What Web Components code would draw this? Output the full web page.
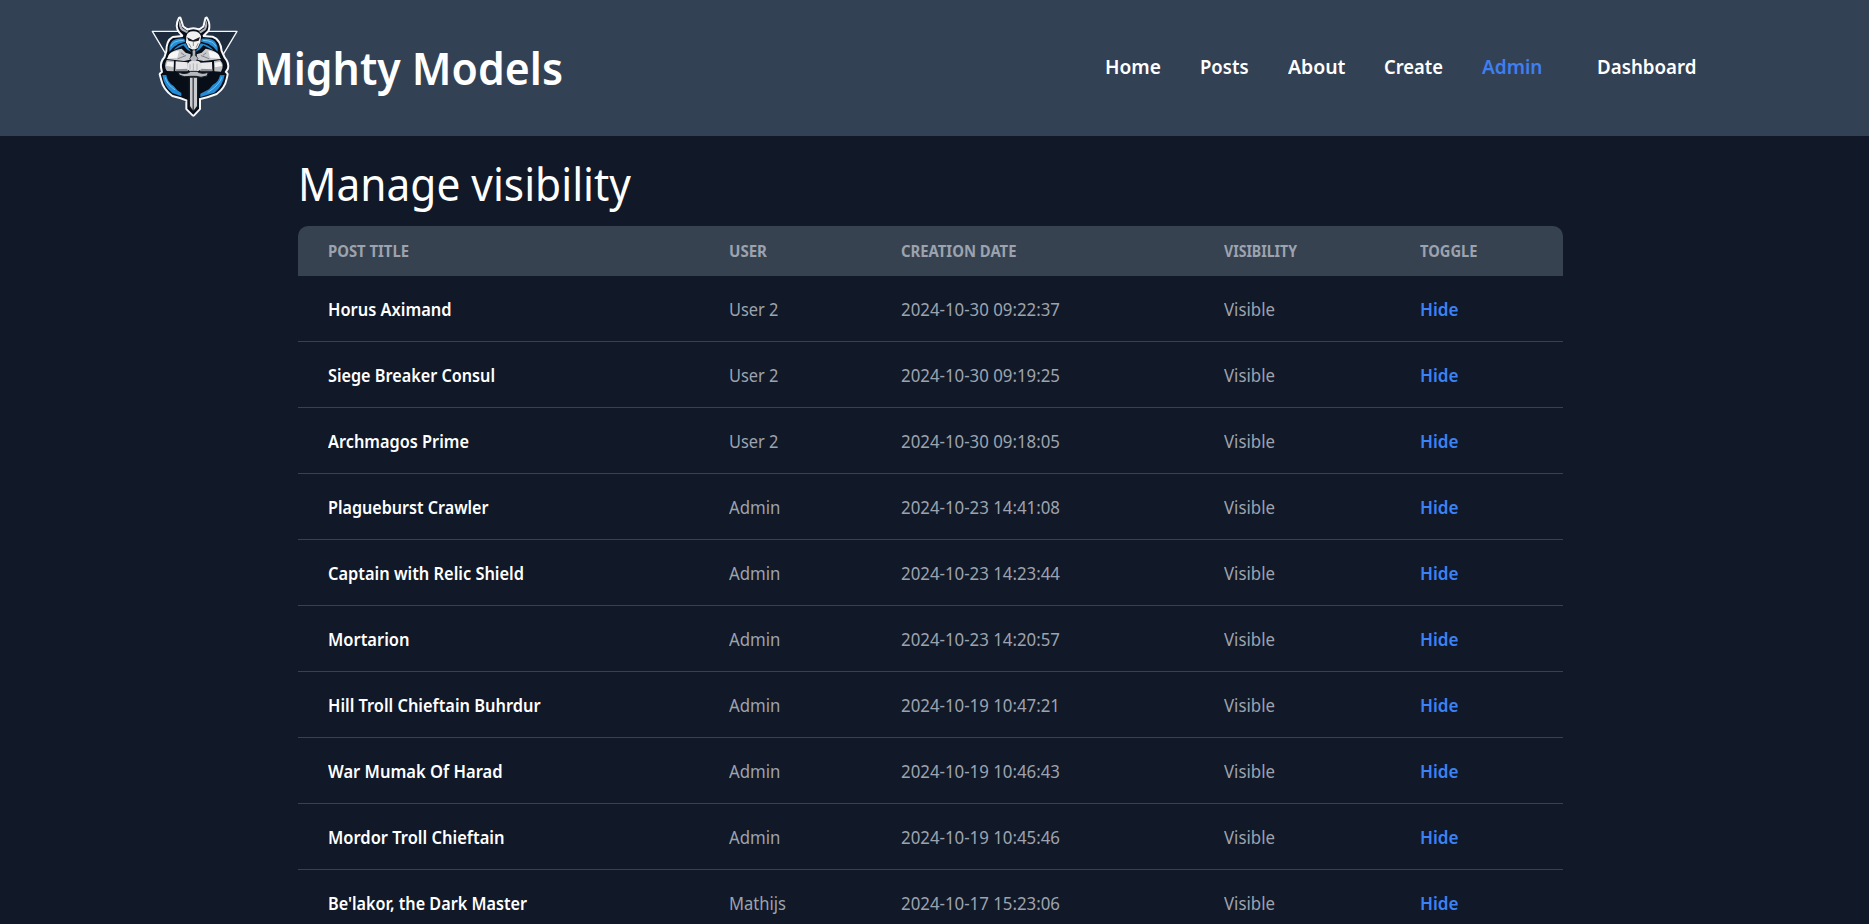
<!DOCTYPE html>
<html lang="en">
<head>
<meta charset="utf-8">
<title>Mighty Models</title>
<style>
body{margin:0;background:#111827;color:#fff;font-family:"Noto Sans","Open Sans",sans-serif;overflow:hidden;height:924px}
</style>
</head>
<body>
<mm-app></mm-app>
<script>
const define=(name,html,setup)=>customElements.define(name,class extends HTMLElement{
  connectedCallback(){
    if(this.shadowRoot)return;
    const t=document.createElement('template');
    t.innerHTML=typeof html==='function'?html(this):html;
    this.attachShadow({mode:'open'}).append(t.content.cloneNode(true));
    if(setup)setup(this);
  }
});

// Single line of text condensed to occupy a given width.
define('mm-text','<style>:host{display:inline-block;white-space:nowrap}span{display:inline-block;transform-origin:0 50%}</style><span><slot></slot></span>',el=>{
  const w=parseFloat(el.getAttribute('w')),s=el.shadowRoot.querySelector('span');
  if(!w)return;
  const natural=s.getBoundingClientRect().width;
  el.style.width=w+'px';
  s.style.transform=`scaleX(${(w/natural).toFixed(4)})`;
});

define('mm-logo',`<style>:host{display:block;width:110px;height:120px}svg{display:block}</style>
<svg width="110" height="120" viewBox="0 0 330 360" stroke-linejoin="round" stroke-linecap="round">
<path d="M37 79H291L248 151H80Z" fill="#1d2b3c" stroke="#f4f7fa" stroke-width="4"/>
<path d="M119 41Q107 64 120 80L130 91L128 96L99 99Q82 108 82 139L76 158Q64 171 66 187L69 202L62 208L67 226Q72 250 98 270L123 277L142 284V311L160 329L177 311V280L201 274L229 264Q252 247 257 221L260 208L254 201L261 190Q265 175 251 158L242 139Q239 106 217 98L189 96L188 91L203 76Q209 58 199 41L193 66L178 77Q160 68 142 77L127 66Z" fill="#080e17" stroke="#f7f8fa" stroke-width="12"/>
<path d="M119 41Q107 64 120 80L130 91L128 96L99 99Q82 108 82 139L76 158Q64 171 66 187L69 202L62 208L67 226Q72 250 98 270L123 277L142 284V311L160 329L177 311V280L201 274L229 264Q252 247 257 221L260 208L254 201L261 190Q265 175 251 158L242 139Q239 106 217 98L189 96L188 91L203 76Q209 58 199 41L193 66L178 77Q160 68 142 77L127 66Z" fill="#080e17"/>
<path d="M119 45Q112 67 126 77L140 84L145 80L127 69ZM199 45L193 70L177 80L182 85L196 76Q206 62 199 45" fill="#aeb2b8"/>
<path d="M133 101Q108 98 97 108Q86 120 88 140Q100 124 116 116L136 110ZM137 115Q112 120 100 136L118 127L130 121L142 134L154 141L143 127ZM185 101Q213 98 223 108Q235 120 233 140Q221 124 205 116L183 110ZM182 115Q208 120 220 136L202 127L190 121L178 134L166 141L176 127ZM67 210L79 210Q82 232 101 243L112 256L124 264V274L97 264Q71 243 67 210ZM254 210L240 211Q237 230 218 240L207 253L181 266V276L223 263Q248 244 254 210Z" fill="#248bd4"/>
<path d="M93 123Q97 107 130 106M227 123Q222 107 190 106M76 218Q80 238 104 254M245 218Q240 238 204 262" fill="none" stroke="#80cdf3" stroke-width="2.5"/>
<path d="M139 94Q142 79 160 79Q178 79 183 94L181 112L173 129L161 135L146 128L138 112Z" fill="#f1f1f2"/>
<path d="M141 97L159 106L180 96L176 107L161 110L146 107Z" fill="#17191e"/>
<path d="M160 111V122M147 117L153 127M174 116L169 127" fill="none" stroke="#777c84" stroke-width="2.5"/>
<path d="M90 145Q102 134 125 131L137 143L152 148L150 164L132 168L112 166L80 162ZM232 145Q220 134 197 131L185 143L170 148L172 164L190 168L210 166L243 162Z" fill="#c9cacd"/>
<path d="M86 150Q96 138 117 137L112 158L83 161ZM237 150Q226 138 205 137L210 158L240 161Z" fill="#f7f7f7"/>
<path d="M114 161L137 152M207 161L184 152M124 144L132 150M198 144L190 150" stroke="#7d828a" stroke-width="3"/>
<path d="M80 165L102 167L101 199L81 198Q70 184 80 165ZM240 165L222 168L223 199L243 200Q255 180 240 165Z" fill="#bbbdc1"/>
<path d="M82 170L101 172L100 186L78 182ZM241 170L224 173L225 187L247 183Z" fill="#f4f4f4"/>
<path d="M107 169L143 172V198H106ZM216 171L181 173V198H217Z" fill="#e9e9eb"/>
<path d="M108 193L143 191V199H107ZM217 193L181 191V199H217Z" fill="#8a8e96"/>
<path d="M157 138L162 133L167 138L166 151L174 160L165 173H158L149 161L157 151Z" fill="#b3b6bb" stroke="#252930" stroke-width="2"/>
<path d="M142 177Q151 163 162 169Q179 163 184 178V193L171 200H153L141 193Z" fill="#e2e2e4"/>
<path d="M150 179V193M160 176V195M171 177V194" stroke="#a5a8ac" stroke-width="2.5"/>
<path d="M116 202Q138 211 152 199H171Q183 209 205 202L201 213Q182 220 168 214L151 214Q133 218 119 211Z" fill="#b6babe" stroke="#171c24" stroke-width="3"/>
<path d="M146 217H175V304L160 321L146 305Z" fill="#171b22"/>
<path d="M150 218H158V315L150 303ZM162 218H171V303L162 315Z" fill="#c8cacd"/>
<path d="M160 218V315" stroke="#555c66" stroke-width="3"/>
</svg>`);

define('mm-nav-link',`<style>:host{display:block;color:#fff;font-weight:600;font-size:20px;line-height:30px}:host([active]){color:#3f7ff0}</style><slot></slot>`);

define('mm-header',`<style>
:host{display:flex;box-sizing:border-box;height:136px;background:#334155;padding:5px 173px 0 140px;align-items:flex-start}
.name{margin:33px 0 0 3.5px;font-size:45px;line-height:60px;font-weight:600}
nav{display:flex;gap:39px;margin:47px 0 0 auto}.last{margin-left:15px}
</style>
<mm-logo></mm-logo><div class="name"><mm-text w="309">Mighty Models</mm-text></div>
<nav><mm-nav-link><mm-text w="56">Home</mm-text></mm-nav-link><mm-nav-link><mm-text w="48.5">Posts</mm-text></mm-nav-link><mm-nav-link><mm-text w="57.5">About</mm-text></mm-nav-link><mm-nav-link><mm-text w="59">Create</mm-text></mm-nav-link><mm-nav-link active><mm-text w="60.5">Admin</mm-text></mm-nav-link><mm-nav-link class="last"><mm-text w="99.5">Dashboard</mm-text></mm-nav-link></nav>`);

define('mm-row',`<style>
:host{display:grid;grid-template-columns:401px 172px 323px 196px 1fr;box-sizing:border-box;height:66px;padding-top:2px;align-items:center;border-bottom:1px solid #374151;color:#9ca3af;font-size:17.5px;line-height:25px}
:host([head]){height:50px;padding-top:2px;border:0;background:#374250;border-radius:10px 10px 0 0;font-size:15.4px;font-weight:700;line-height:20px}
::slotted(*){margin-left:30px}
::slotted(.title){color:#fff;font-weight:600}
::slotted(.toggle){color:#3b82f6;font-weight:600}
</style><slot></slot>`);

const posts=[
['Horus Aximand',123.5,'User 2','2024-10-30 09:22:37'],
['Siege Breaker Consul',167,'User 2','2024-10-30 09:19:25'],
['Archmagos Prime',141,'User 2','2024-10-30 09:18:05'],
['Plagueburst Crawler',160.5,'Admin','2024-10-23 14:41:08'],
['Captain with Relic Shield',196,'Admin','2024-10-23 14:23:44'],
['Mortarion',81.5,'Admin','2024-10-23 14:20:57'],
['Hill Troll Chieftain Buhrdur',212.5,'Admin','2024-10-19 10:47:21'],
['War Mumak Of Harad',174.5,'Admin','2024-10-19 10:46:43'],
['Mordor Troll Chieftain',176.5,'Admin','2024-10-19 10:45:46'],
["Be'lakor, the Dark Master",199,'Mathijs','2024-10-17 15:23:06']];
const userWidths={'User 2':49.5,Admin:51.5,Mathijs:57};

define('mm-post-table',()=>`<style>:host{display:block;width:1265px}</style>
<mm-row head><mm-text w="81">POST TITLE</mm-text><mm-text w="38">USER</mm-text><mm-text w="115.5">CREATION DATE</mm-text><mm-text w="73">VISIBILITY</mm-text><mm-text w="57.5">TOGGLE</mm-text></mm-row>`+
posts.map(([t,w,u,d])=>`<mm-row><mm-text class="title" w="${w}">${t}</mm-text><mm-text w="${userWidths[u]}">${u}</mm-text><mm-text w="159">${d}</mm-text><mm-text w="51">Visible</mm-text><mm-text class="toggle" w="38.5">Hide</mm-text></mm-row>`).join(''));

define('mm-app',`<style>
:host{display:block;height:924px;overflow:hidden}
main{padding:18px 0 0 298px}
h1{margin:0 0 12px;font-size:45px;line-height:60px;font-weight:400}
</style><mm-header></mm-header><main><h1><mm-text w="333">Manage visibility</mm-text></h1><mm-post-table></mm-post-table></main>`);
</script>
</body>
</html>
